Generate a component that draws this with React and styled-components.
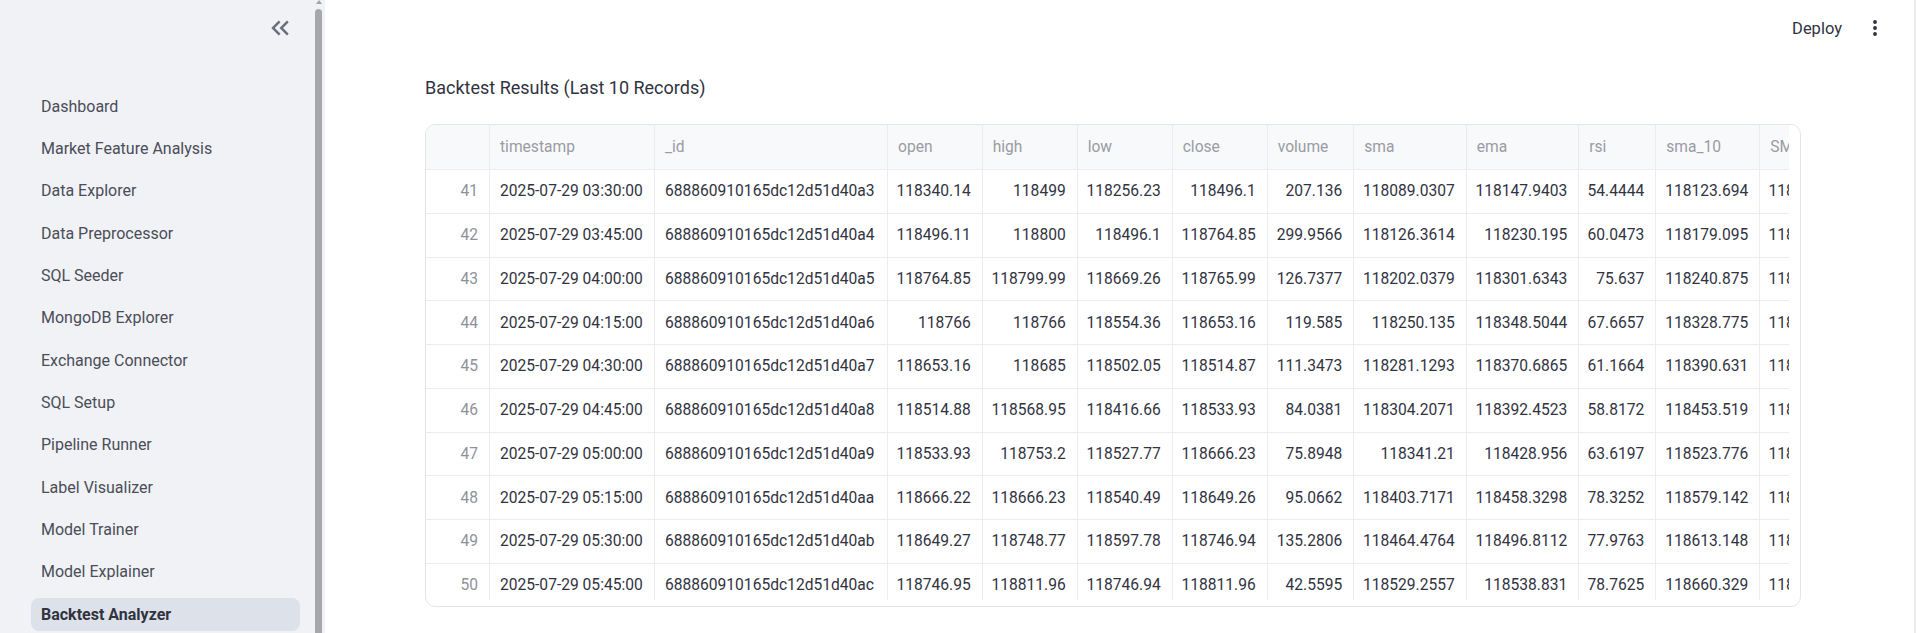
import React from "react";
import styled, { createGlobalStyle } from "styled-components";

const GlobalStyle = createGlobalStyle`
  html, body { margin: 0; padding: 0; background: #ffffff; }
  body { font-family: Roboto, "Liberation Sans", sans-serif; color: #31333f; }
  * { box-sizing: border-box; }
`;

const Page = styled.div`
  display: flex;
  width: 1919px;
  height: 633px;
  overflow: hidden;
`;

const Sidebar = styled.aside`
  flex: 0 0 325px;
  display: flex;
  background: #f0f2f6;
`;

const SidebarInner = styled.div`
  flex: 1;
  display: flex;
  flex-direction: column;
`;

const SidebarTop = styled.div`
  height: 56px;
  display: flex;
  align-items: center;
  justify-content: flex-end;
  padding-right: 17px;
`;

const CollapseButton = styled.button`
  width: 30px;
  height: 30px;
  padding: 0;
  border: none;
  background: transparent;
  color: #6b6e7a;
  display: flex;
  align-items: center;
  justify-content: center;
  svg { display: block; }
`;

const Nav = styled.nav`
  display: flex;
  flex-direction: column;
  gap: 9.37px;
  margin-top: 33.5px;
  padding-left: 31px;
`;

const NavItem = styled.a`
  width: 269px;
  height: 33px;
  flex: 0 0 33px;
  display: flex;
  align-items: center;
  padding-left: 10px;
  border-radius: 8px;
  font-size: 16px;
  white-space: nowrap;
  color: ${(p) => (p.$active ? "#31333f" : "#4b4d59")};
  font-weight: ${(p) => (p.$active ? 700 : 400)};
  background: ${(p) => (p.$active ? "#dde1ea" : "transparent")};
`;

const ScrollTrack = styled.div`
  flex: 0 0 13px;
  display: flex;
  flex-direction: column;
  align-items: center;
  padding: 0 3px;
`;

const ScrollArrow = styled.div`
  width: 0;
  height: 0;
  border-left: 3.5px solid transparent;
  border-right: 3.5px solid transparent;
  border-bottom: 4px solid #a3a4a8;
`;

const ScrollThumb = styled.div`
  margin-top: 5px;
  width: 7px;
  flex: 1;
  border-radius: 4px 4px 0 0;
  background: #a6a7ab;
`;

const Main = styled.main`
  flex: 1;
  display: flex;
  min-width: 0;
`;

const MainColumn = styled.div`
  flex: 1;
  display: flex;
  flex-direction: column;
  min-width: 0;
`;

const PageGutter = styled.div`
  flex: 0 0 5px;
  border-left: 2px solid #ececee;
`;

const Header = styled.header`
  height: 56px;
  display: flex;
  align-items: center;
  justify-content: flex-end;
  padding-right: 28px;
`;

const DeployButton = styled.span`
  font-size: 16.5px;
  color: #31333f;
  margin-right: 22px;
`;

const MenuIcon = styled.svg`
  display: block;
  color: #31333f;
`;

const Content = styled.section`
  padding-left: 100px;
`;

const Title = styled.h3`
  margin: 20px 0 24px;
  font-size: 18px;
  line-height: 24px;
  font-weight: 400;
  color: #31333f;
`;

const Frame = styled.div`
  width: 1376px;
  height: 483px;
  border: 1px solid #e4e5e9;
  border-radius: 10px;
  overflow: hidden;
  display: grid;
  grid-template-columns: 1363px 11px;
  grid-template-rows: 475px 6px;
`;

const Viewport = styled.div`
  overflow: hidden;
`;

const Grid = styled.div`
  display: grid;
  grid-template-columns: ${(p) => p.$cols};
  grid-template-rows: 45px repeat(10, 43.75px);
  width: max-content;
`;

const Cell = styled.div`
  display: flex;
  align-items: center;
  justify-content: ${(p) => (p.$right ? "flex-end" : "flex-start")};
  padding: 0 11px 0 10px;
  border-right: 1px solid #ebecef;
  border-bottom: 1px solid #ebecef;
  white-space: nowrap;
  overflow: hidden;
  font-size: 15.6px;
  color: #31333f;
`;

const HeadCell = styled(Cell)`
  background: #f8f9fb;
  color: #9a9ca4;
`;

const IndexCell = styled(Cell)`
  color: #8f919a;
`;

const widths = [64, 165, 233, 94.7, 95, 95, 95, 86.6, 112.5, 112.5, 77, 104, 112];
const headers = ["", "timestamp", "_id", "open", "high", "low", "close", "volume", "sma", "ema", "rsi", "sma_10", "SMA_20"];

const rows = [
  [41, "2025-07-29 03:30:00", "688860910165dc12d51d40a3", "118340.14", "118499", "118256.23", "118496.1", "207.136", "118089.0307", "118147.9403", "54.4444", "118123.694", "118102.4815"],
  [42, "2025-07-29 03:45:00", "688860910165dc12d51d40a4", "118496.11", "118800", "118496.1", "118764.85", "299.9566", "118126.3614", "118230.195", "60.0473", "118179.095", "118131.2270"],
  [43, "2025-07-29 04:00:00", "688860910165dc12d51d40a5", "118764.85", "118799.99", "118669.26", "118765.99", "126.7377", "118202.0379", "118301.6343", "75.637", "118240.875", "118168.9035"],
  [44, "2025-07-29 04:15:00", "688860910165dc12d51d40a6", "118766", "118766", "118554.36", "118653.16", "119.585", "118250.135", "118348.5044", "67.6657", "118328.775", "118201.6640"],
  [45, "2025-07-29 04:30:00", "688860910165dc12d51d40a7", "118653.16", "118685", "118502.05", "118514.87", "111.3473", "118281.1293", "118370.6865", "61.1664", "118390.631", "118229.1185"],
  [46, "2025-07-29 04:45:00", "688860910165dc12d51d40a8", "118514.88", "118568.95", "118416.66", "118533.93", "84.0381", "118304.2071", "118392.4523", "58.8172", "118453.519", "118262.3405"],
  [47, "2025-07-29 05:00:00", "688860910165dc12d51d40a9", "118533.93", "118753.2", "118527.77", "118666.23", "75.8948", "118341.21", "118428.956", "63.6197", "118523.776", "118301.8720"],
  [48, "2025-07-29 05:15:00", "688860910165dc12d51d40aa", "118666.22", "118666.23", "118540.49", "118649.26", "95.0662", "118403.7171", "118458.3298", "78.3252", "118579.142", "118346.0955"],
  [49, "2025-07-29 05:30:00", "688860910165dc12d51d40ab", "118649.27", "118748.77", "118597.78", "118746.94", "135.2806", "118464.4764", "118496.8112", "77.9763", "118613.148", "118392.7430"],
  [50, "2025-07-29 05:45:00", "688860910165dc12d51d40ac", "118746.95", "118811.96", "118746.94", "118811.96", "42.5595", "118529.2557", "118538.831", "78.7625", "118660.329", "118437.5120"],
];

const navItems = [
  "Dashboard",
  "Market Feature Analysis",
  "Data Explorer",
  "Data Preprocessor",
  "SQL Seeder",
  "MongoDB Explorer",
  "Exchange Connector",
  "SQL Setup",
  "Pipeline Runner",
  "Label Visualizer",
  "Model Trainer",
  "Model Explainer",
  "Backtest Analyzer",
];

function DoubleChevron() {
  return (
    <svg width="30" height="30" viewBox="0 0 24 24" fill="currentColor">
      <path d="M17.59 18L19 16.59 14.42 12 19 7.41 17.59 6l-6 6z" />
      <path d="M11 18l1.41-1.41L7.83 12l4.58-4.59L11 6l-6 6z" />
    </svg>
  );
}

export default function App() {
  const cols = widths.map((w) => `${w}px`).join(" ");
  return (
    <>
      <GlobalStyle />
      <Page>
        <Sidebar>
          <SidebarInner>
            <SidebarTop>
              <CollapseButton aria-label="Collapse sidebar">
                <DoubleChevron />
              </CollapseButton>
            </SidebarTop>
            <Nav>
              {navItems.map((n) => (
                <NavItem key={n} $active={n === "Backtest Analyzer"}>
                  {n}
                </NavItem>
              ))}
            </Nav>
          </SidebarInner>
          <ScrollTrack>
            <ScrollArrow />
            <ScrollThumb />
          </ScrollTrack>
        </Sidebar>
        <Main>
          <MainColumn>
            <Header>
              <DeployButton>Deploy</DeployButton>
              <MenuIcon width="22" height="22" viewBox="0 0 24 24" fill="currentColor">
                <circle cx="12" cy="5.5" r="2.1" />
                <circle cx="12" cy="12" r="2.1" />
                <circle cx="12" cy="18.5" r="2.1" />
              </MenuIcon>
            </Header>
            <Content>
              <Title>Backtest Results (Last 10 Records)</Title>
              <Frame>
                <Viewport>
                  <Grid $cols={cols}>
                    {headers.map((h, i) => (
                      <HeadCell key={`h${i}`}>{h}</HeadCell>
                    ))}
                    {rows.map((r) =>
                      r.map((v, j) =>
                        j === 0 ? (
                          <IndexCell key={`${r[0]}-${j}`} $right>
                            {v}
                          </IndexCell>
                        ) : (
                          <Cell key={`${r[0]}-${j}`} $right={j > 2}>
                            {v}
                          </Cell>
                        )
                      )
                    )}
                  </Grid>
                </Viewport>
              </Frame>
            </Content>
          </MainColumn>
          <PageGutter />
        </Main>
      </Page>
    </>
  );
}
